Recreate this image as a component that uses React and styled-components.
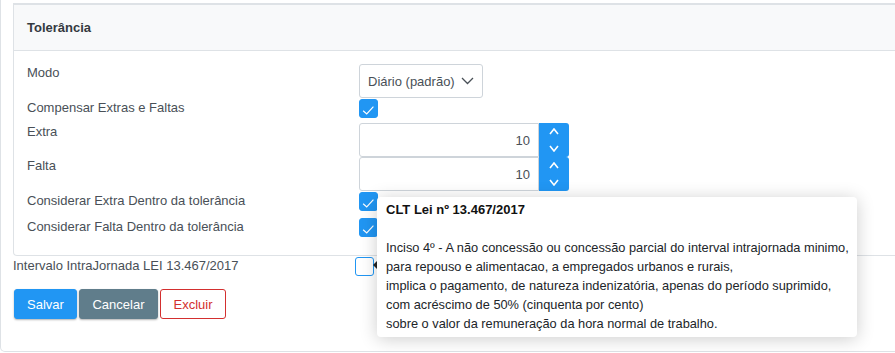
import React from 'react';
import styled, { createGlobalStyle } from 'styled-components';

const Global = createGlobalStyle`
  html, body { margin: 0; padding: 0; background: #fff; overflow: hidden; }
  body { font-family: "Liberation Sans", Arial, sans-serif; font-size: 13px; color: #495057; }
  * { box-sizing: border-box; }
`;

const Panel = styled.div`
  position: relative;
  width: calc(100% + 24px);
  height: 352px;
  padding: 3px 12px 0 12px;
  border: 1px solid #dee2e6;
  border-top: none;
  border-radius: 0 0 5px 5px;
`;

const Card = styled.section`
  border: 1px solid #dee2e6;
  border-top-width: 2px;
  border-radius: 0 0 4px 4px;
  background: #fff;
`;

const CardHeader = styled.header`
  height: 46px;
  padding: 0 13px;
  display: flex;
  align-items: center;
  background: #f8f9fa;
  border-bottom: 1px solid #dee2e6;
  font-weight: bold;
  color: #343a40;
`;

const CardBody = styled.div`
  padding: 13px 13px 18px 13px;
`;

const Row = styled.div`
  display: grid;
  grid-template-columns: ${p => p.$label}px 1fr;
  align-items: start;
  margin-top: ${p => p.$mt || 0}px;
`;

const Label = styled.label`
  line-height: 18px;
  color: #495057;
`;

const Select = styled.div`
  width: 124px;
  height: 34px;
  display: flex;
  align-items: center;
  justify-content: space-between;
  padding: 0 8px 0 8px;
  border: 1px solid #ced4da;
  border-radius: 3px;
  background: #fff;
  color: #495057;
`;

const Box = styled.span`
  width: 19px;
  height: 19px;
  display: inline-flex;
  align-items: center;
  justify-content: center;
  border-radius: 3px;
  border: 1px solid #2196f3;
  background: ${p => (p.$checked ? '#2196f3' : '#fff')};
`;

const Spinner = styled.div`
  display: flex;
  width: 210px;
  height: 34px;
`;

const NumInput = styled.div`
  width: 180px;
  height: 34px;
  display: flex;
  align-items: center;
  justify-content: flex-end;
  padding-right: 8px;
  border: 1px solid #ced4da;
  border-radius: 3px 0 0 3px;
  background: #fff;
  color: #495057;
`;

const SpinButtons = styled.div`
  width: 30px;
  display: flex;
  flex-direction: column;
  background: #2196f3;
  border-radius: 0 3px 3px 0;
`;

const SpinBtn = styled.span`
  flex: 1;
  display: flex;
  align-items: center;
  justify-content: center;
`;

const Outside = styled(Row)`
  margin-top: 1px;
`;

const Buttons = styled.div`
  display: flex;
  gap: 2px;
  margin: 13px 0 0 1px;
`;

const Button = styled.button`
  height: 30px;
  width: ${p => p.$w}px;
  padding: 0;
  font-family: inherit;
  font-size: 13px;
  border-radius: 3px;
  cursor: pointer;
  border: 1px solid ${p => p.$border};
  background: ${p => p.$bg};
  color: ${p => p.$color};
  box-shadow: ${p => (p.$flat ? 'none' : '0 1px 2px rgba(0,0,0,0.3)')};
`;

const Tooltip = styled.div`
  position: absolute;
  left: 376px;
  top: 197px;
  width: 480px;
  padding: 3px 9px 4px 9px;
  background: #fff;
  border-radius: 4px;
  box-shadow: 0 2px 18px rgba(0,0,0,0.2);
  color: #212529;
  line-height: 19px;
  font-size: 12.8px;
  white-space: nowrap;
`;

const Arrow = styled.span`
  position: absolute;
  left: -4px;
  top: 64px;
  width: 0;
  height: 0;
  border-top: 4px solid transparent;
  border-bottom: 4px solid transparent;
  border-right: 4px solid #222;
`;

const TipTitle = styled.div`
  font-weight: bold;
  font-size: 13px;
  color: #111;
`;

const TipLine = styled.div`
  min-height: 19px;
`;

const Check = () => (
  <svg width="19" height="19" viewBox="0 0 19 19">
    <polyline points="3.5,12 7.5,15.5 15,7.5" fill="none" stroke="#fff" strokeWidth="1.3" />
  </svg>
);

const Chevron = ({ up, w = 8, h = 5, color = '#fff', sw = 1.6 }) => (
  <svg width={w + 2} height={h + 2} viewBox={`-1 -1 ${w + 2} ${h + 2}`}>
    <polyline
      points={up ? `0,${h} ${w / 2},0 ${w},${h}` : `0,0 ${w / 2},${h} ${w},0`}
      fill="none"
      stroke={color}
      strokeWidth={sw}
    />
  </svg>
);

const NumberField = ({ value }) => (
  <Spinner>
    <NumInput>{value}</NumInput>
    <SpinButtons>
      <SpinBtn><Chevron up /></SpinBtn>
      <SpinBtn><Chevron /></SpinBtn>
    </SpinButtons>
  </Spinner>
);

export default function App() {
  return (
    <>
      <Global />
      <Panel>
        <Card>
          <CardHeader>Tolerância</CardHeader>
          <CardBody>
            <Row $label={332}>
              <Label>Modo</Label>
              <Select>
                <span>Diário (padrão)</span>
                <Chevron w={11} h={5.5} color="#495057" sw={1.3} />
              </Select>
            </Row>
            <Row $label={332} $mt={1}>
              <Label>Compensar Extras e Faltas</Label>
              <Box $checked><Check /></Box>
            </Row>
            <Row $label={332} $mt={5}>
              <Label>Extra</Label>
              <NumberField value="10" />
            </Row>
            <Row $label={332}>
              <Label>Falta</Label>
              <NumberField value="10" />
            </Row>
            <Row $label={332} $mt={1}>
              <Label>Considerar Extra Dentro da tolerância</Label>
              <Box $checked><Check /></Box>
            </Row>
            <Row $label={332} $mt={7}>
              <Label>Considerar Falta Dentro da tolerância</Label>
              <Box $checked><Check /></Box>
            </Row>
          </CardBody>
        </Card>
        <Outside $label={342}>
          <Label>Intervalo IntraJornada LEI 13.467/2017</Label>
          <Box />
        </Outside>
        <Buttons>
          <Button $w={63} $bg="#2196f3" $border="#2196f3" $color="#fff">Salvar</Button>
          <Button $w={79} $bg="#607d8b" $border="#607d8b" $color="#fff">Cancelar</Button>
          <Button $w={66} $bg="#fff" $border="#d32f2f" $color="#d32f2f" $flat>Excluir</Button>
        </Buttons>
        <Tooltip>
          <Arrow />
          <TipTitle>CLT Lei nº 13.467/2017</TipTitle>
          <TipLine />
          <TipLine>Inciso 4º - A não concessão ou concessão parcial do interval intrajornada minimo,</TipLine>
          <TipLine>para repouso e alimentacao, a empregados urbanos e rurais,</TipLine>
          <TipLine>implica o pagamento, de natureza indenizatória, apenas do período suprimido,</TipLine>
          <TipLine>com acréscimo de 50% (cinquenta por cento)</TipLine>
          <TipLine>sobre o valor da remuneração da hora normal de trabalho.</TipLine>
        </Tooltip>
      </Panel>
    </>
  );
}
